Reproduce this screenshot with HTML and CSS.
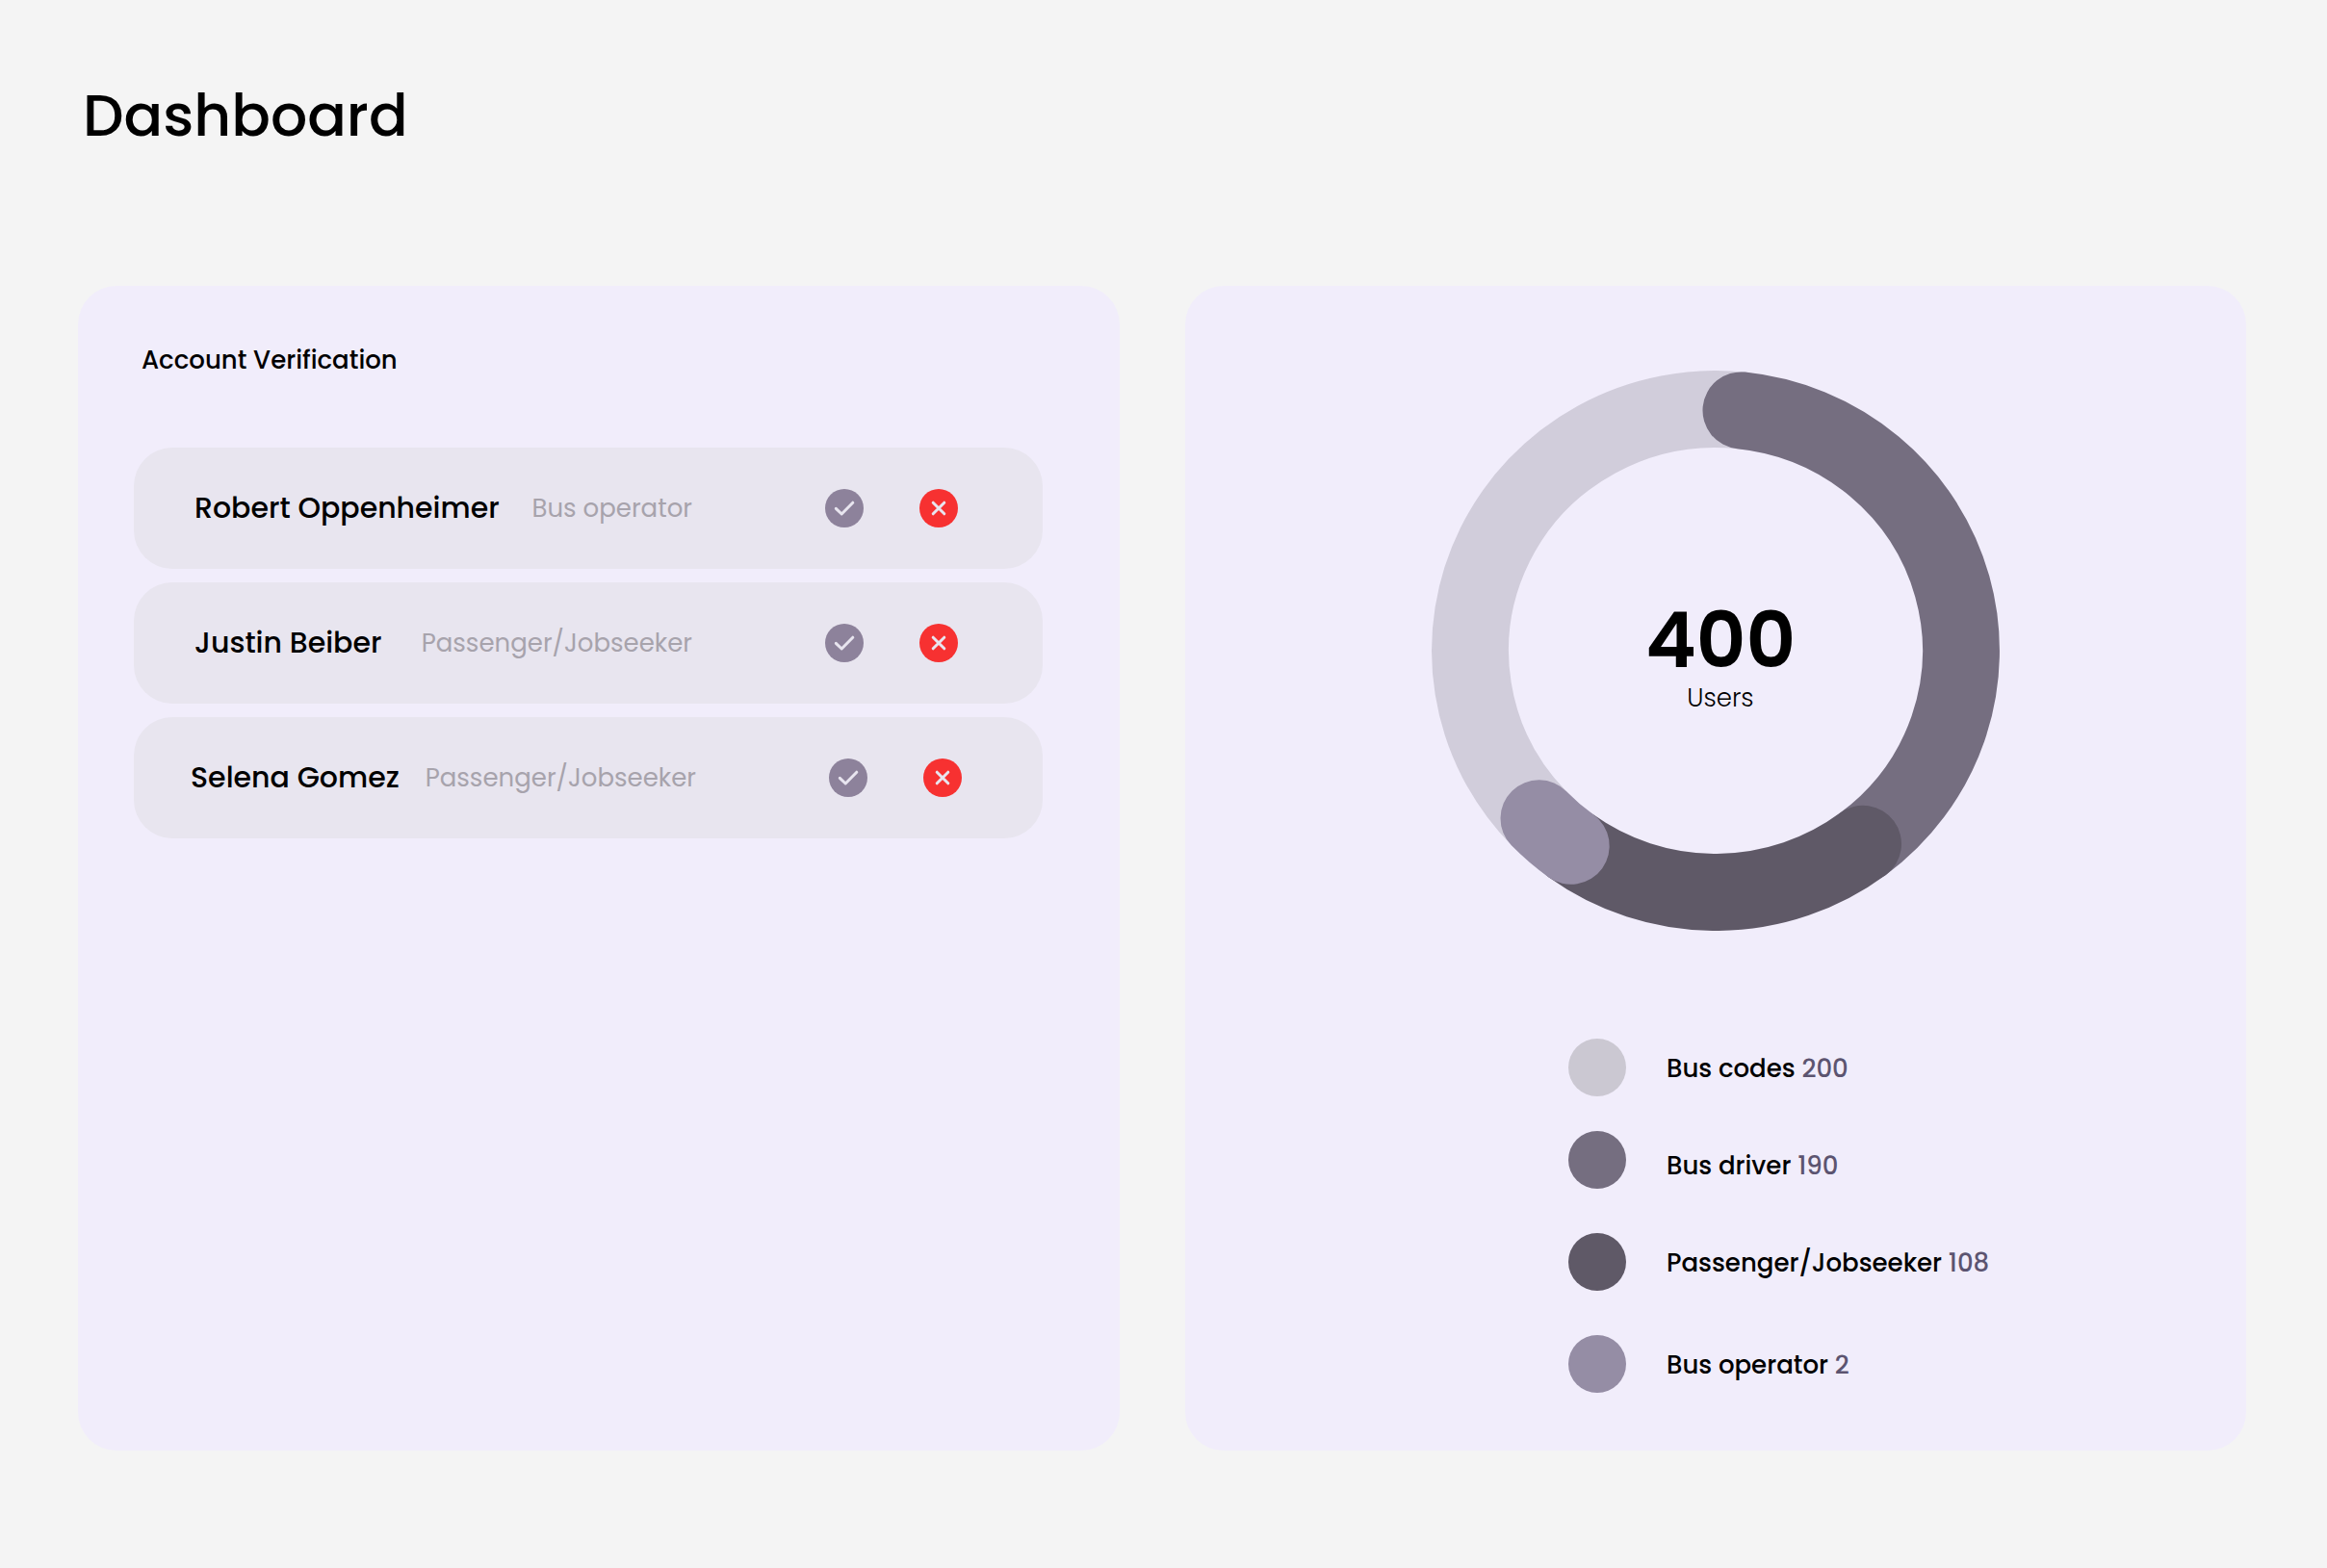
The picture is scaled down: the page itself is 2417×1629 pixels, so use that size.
FILE: index.html
```html
<!DOCTYPE html>
<html lang="en">
<head>
<meta charset="utf-8">
<meta name="viewport" content="width=device-width, initial-scale=1">
<title>Dashboard</title>
<link rel="stylesheet" href="styles.css">
</head>
<body>
<svg class="sprite" aria-hidden="true">
  <symbol id="icon-check" viewBox="0 0 40 40"><path d="M11.3 20.3 17.2 26 28.8 14.2"/></symbol>
  <symbol id="icon-cross" viewBox="0 0 40 40"><path d="M14.2 14.2 25.8 25.8M25.8 14.2 14.2 25.8"/></symbol>
</svg>
<main class="page">
  <h1 class="page-title">Dashboard</h1>
  <div class="panels">
    <section class="panel verification">
      <h2 class="panel-title">Account Verification</h2>
      <ul class="requests">
        <li class="request">
          <span class="name">Robert Oppenheimer</span>
          <span class="role">Bus operator</span>
          <span class="actions">
            <button class="action approve" type="button" aria-label="Approve Robert Oppenheimer"><svg class="icon"><use href="#icon-check"/></svg></button>
            <button class="action reject" type="button" aria-label="Reject Robert Oppenheimer"><svg class="icon"><use href="#icon-cross"/></svg></button>
          </span>
        </li>
        <li class="request">
          <span class="name">Justin Beiber</span>
          <span class="role">Passenger/Jobseeker</span>
          <span class="actions">
            <button class="action approve" type="button" aria-label="Approve Justin Beiber"><svg class="icon"><use href="#icon-check"/></svg></button>
            <button class="action reject" type="button" aria-label="Reject Justin Beiber"><svg class="icon"><use href="#icon-cross"/></svg></button>
          </span>
        </li>
        <li class="request request-wide">
          <span class="name">Selena Gomez</span>
          <span class="role">Passenger/Jobseeker</span>
          <span class="actions">
            <button class="action approve" type="button" aria-label="Approve Selena Gomez"><svg class="icon"><use href="#icon-check"/></svg></button>
            <button class="action reject" type="button" aria-label="Reject Selena Gomez"><svg class="icon"><use href="#icon-cross"/></svg></button>
          </span>
        </li>
      </ul>
    </section>
    <section class="panel users">
      <div class="chart">
        <svg class="donut" viewBox="0 0 590 582" role="img" aria-label="Users by type">
          <path class="arc arc-codes" d="M111.5 465.3A255 251 0 0 1 321.5 41.4"/>
          <path class="arc arc-driver" d="M321.5 41.4A255 251 0 0 1 448 491.8"/>
          <path class="arc arc-passenger" d="M448 491.8A255 251 0 0 1 144.7 493.8"/>
          <path class="arc arc-operator" d="M144.7 493.8A255 251 0 0 1 111.5 465.3"/>
        </svg>
        <div class="total">
          <strong class="total-value">400</strong>
          <span class="total-label">Users</span>
        </div>
      </div>
      <ul class="legend">
        <li class="legend-item"><span class="dot dot-codes"></span><span class="legend-text">Bus codes <span class="count">200</span></span></li>
        <li class="legend-item legend-item-low"><span class="dot dot-driver"></span><span class="legend-text">Bus driver <span class="count">190</span></span></li>
        <li class="legend-item"><span class="dot dot-passenger"></span><span class="legend-text">Passenger/Jobseeker <span class="count">108</span></span></li>
        <li class="legend-item"><span class="dot dot-operator"></span><span class="legend-text">Bus operator <span class="count">2</span></span></li>
      </ul>
    </section>
  </div>
</main>
</body>
</html>
```
FILE: styles.css
```css
*,
*::before,
*::after {
  box-sizing: border-box;
}

body {
  margin: 0;
  background: #f4f4f4;
  color: #000;
  font-family: Poppins, Inter, "Liberation Sans", sans-serif;
  font-size: 26px;
  font-weight: 500;
  line-height: 40px;
}

h1,
h2,
ul {
  margin: 0;
  padding: 0;
  font-weight: 500;
  list-style: none;
}

.sprite {
  display: none;
}

.page {
  display: flex;
  flex-direction: column;
  gap: 137px;
  min-height: 100vh;
  padding: 80px 84px 122px 81px;
}

.page-title {
  padding-left: 5px;
  font-size: 60px;
  line-height: 80px;
}

.panels {
  display: grid;
  flex: 1;
  grid-template-columns: 1082fr 1102fr;
  gap: 68px;
}

.panel {
  border-radius: 40px;
  background: #f1edfb;
}

.verification {
  padding: 57px 80px 57px 58px;
}

.panel-title {
  padding-left: 8px;
  font-size: 26px;
}

.requests {
  display: grid;
  gap: 14px;
  margin-top: 71px;
}

.request {
  display: flex;
  align-items: center;
  min-height: 126px;
  padding: 0 88px 0 63px;
  border-radius: 40px;
  background: #e8e5ef;
}

.request-wide {
  padding: 0 84px 0 59px;
}

.name {
  font-size: 30px;
}

.role {
  margin-left: auto;
  color: #a7a3ac;
  font-weight: 400;
}

.actions {
  display: flex;
  gap: 58px;
  margin-left: 138px;
}

.action {
  width: 40px;
  height: 40px;
  padding: 0;
  border: 0;
  border-radius: 50%;
  cursor: pointer;
}

.approve {
  background: #8d829b;
}

.reject {
  background: #f73131;
}

.icon {
  display: block;
  width: 40px;
  height: 40px;
  fill: none;
  stroke: #e8e5ef;
  stroke-width: 3;
  stroke-linecap: round;
  stroke-linejoin: round;
}

.users {
  padding: 88px 40px 60px;
}

.chart {
  display: grid;
  justify-content: center;
}

.donut,
.total {
  grid-area: 1 / 1;
}

.donut {
  display: block;
  width: 590px;
  max-width: 100%;
}

.arc {
  fill: none;
  stroke-width: 80;
  stroke-linecap: round;
}

.arc-codes {
  stroke: #d1cddb;
}

.arc-driver {
  stroke: #756e80;
}

.arc-passenger {
  stroke: #5f5967;
}

.arc-operator {
  stroke: #958da5;
}

.total {
  display: flex;
  flex-direction: column;
  align-items: center;
  justify-content: center;
  padding: 18px 0 0 10px;
}

.total-value {
  font-size: 80px;
  font-weight: 600;
  line-height: 80px;
}

.total-label {
  font-weight: 300;
}

.legend {
  display: grid;
  gap: 46px;
  margin: 112px 0 0 calc(50% - 153px);
}

.legend-item {
  display: flex;
  align-items: center;
  gap: 42px;
  line-height: 48px;
}

.legend-item-low {
  align-items: flex-end;
  margin-top: -10px;
}

.legend-text {
  padding-top: 2px;
}

.dot {
  flex: none;
  width: 60px;
  height: 60px;
  border-radius: 50%;
}

.dot-codes {
  background: #cbc8d2;
}

.dot-driver {
  background: #756e80;
}

.dot-passenger {
  background: #5f5967;
}

.dot-operator {
  background: #958da5;
}

.count {
  color: #5c5470;
}
```
